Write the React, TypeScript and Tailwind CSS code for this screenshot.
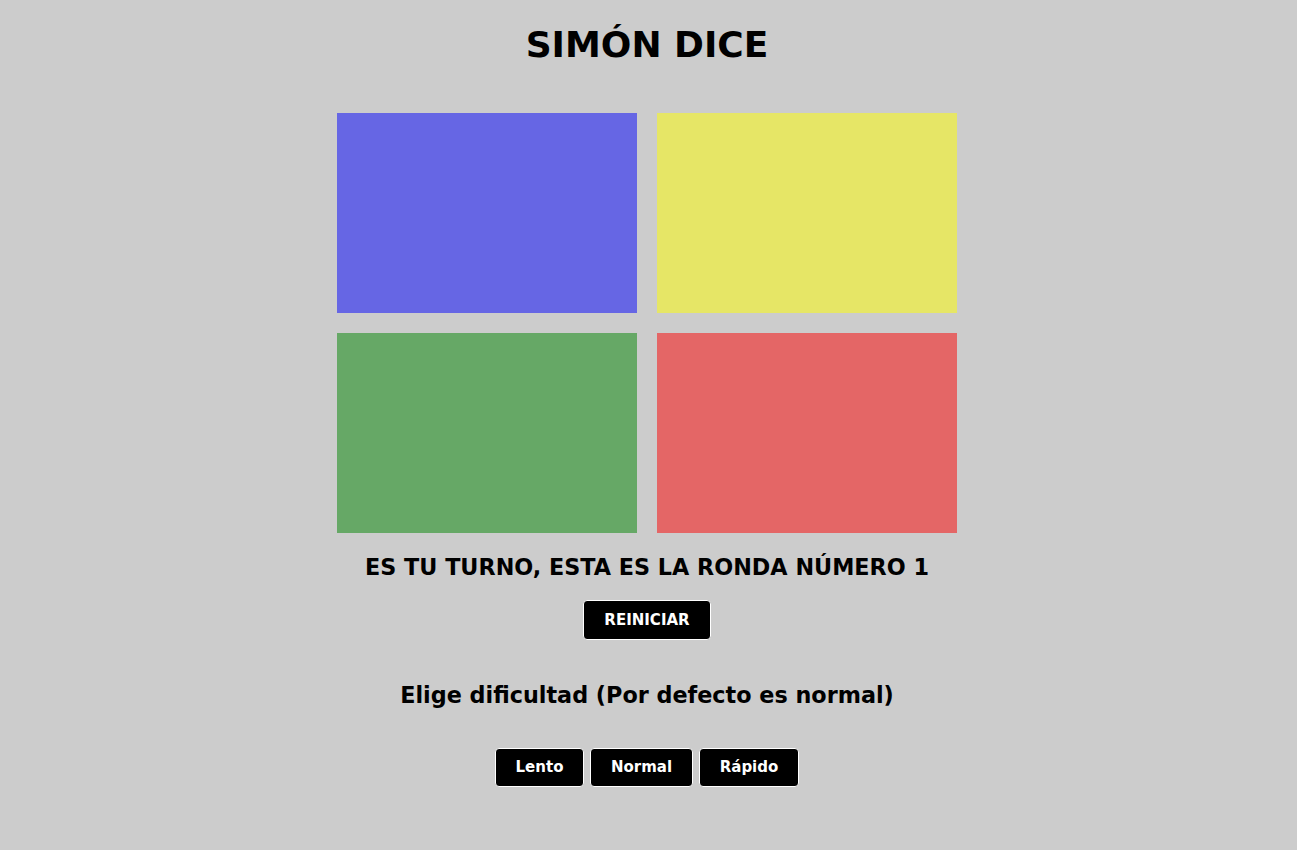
import React from 'react';

const font = { fontFamily: '"DejaVu Sans", "Liberation Sans", sans-serif' };

const Panel = ({ color }: { color: string }) => (
  <div className={`w-[300px] h-[200px] ${color}`} />
);

const SpeedButton = ({ label, width }: { label: string; width: string }) => (
  <button
    className={`${width} h-[39px] bg-black text-white text-[15px] font-bold rounded-[4px] border border-white`}
  >
    {label}
  </button>
);

const App = () => {
  return (
    <div
      className="min-h-[850px] w-full bg-[#cccccc] text-black flex flex-col items-center pt-[21px] pr-[3px]"
      style={font}
    >
      <h1 className="h-[48px] leading-[48px] text-[36px] font-bold">SIMÓN DICE</h1>

      {/* Board */}
      <div className="mt-[44px] grid grid-cols-[300px_300px] gap-[20px]">
        <Panel color="bg-[#6666e4]" />
        <Panel color="bg-[#e6e666]" />
        <Panel color="bg-[#66a866]" />
        <Panel color="bg-[#e46666]" />
      </div>

      <h3 className="mt-[17px] h-[34px] leading-[34px] text-[22.3px] font-bold">
        ES TU TURNO, ESTA ES LA RONDA NÚMERO 1
      </h3>

      <button className="mt-[16px] w-[128px] h-[40px] bg-black text-white text-[15px] font-bold rounded-[4px] border border-white">
        REINICIAR
      </button>

      <h2 className="mt-[41px] h-[28px] leading-[28px] text-[22.3px] font-bold">
        Elige dificultad (Por defecto es normal)
      </h2>

      {/* Difficulty */}
      <div className="mt-[39px] flex gap-[6px]">
        <SpeedButton label="Lento" width="w-[89px]" />
        <SpeedButton label="Normal" width="w-[103px]" />
        <SpeedButton label="Rápido" width="w-[100px]" />
      </div>
    </div>
  );
};

export default App;
